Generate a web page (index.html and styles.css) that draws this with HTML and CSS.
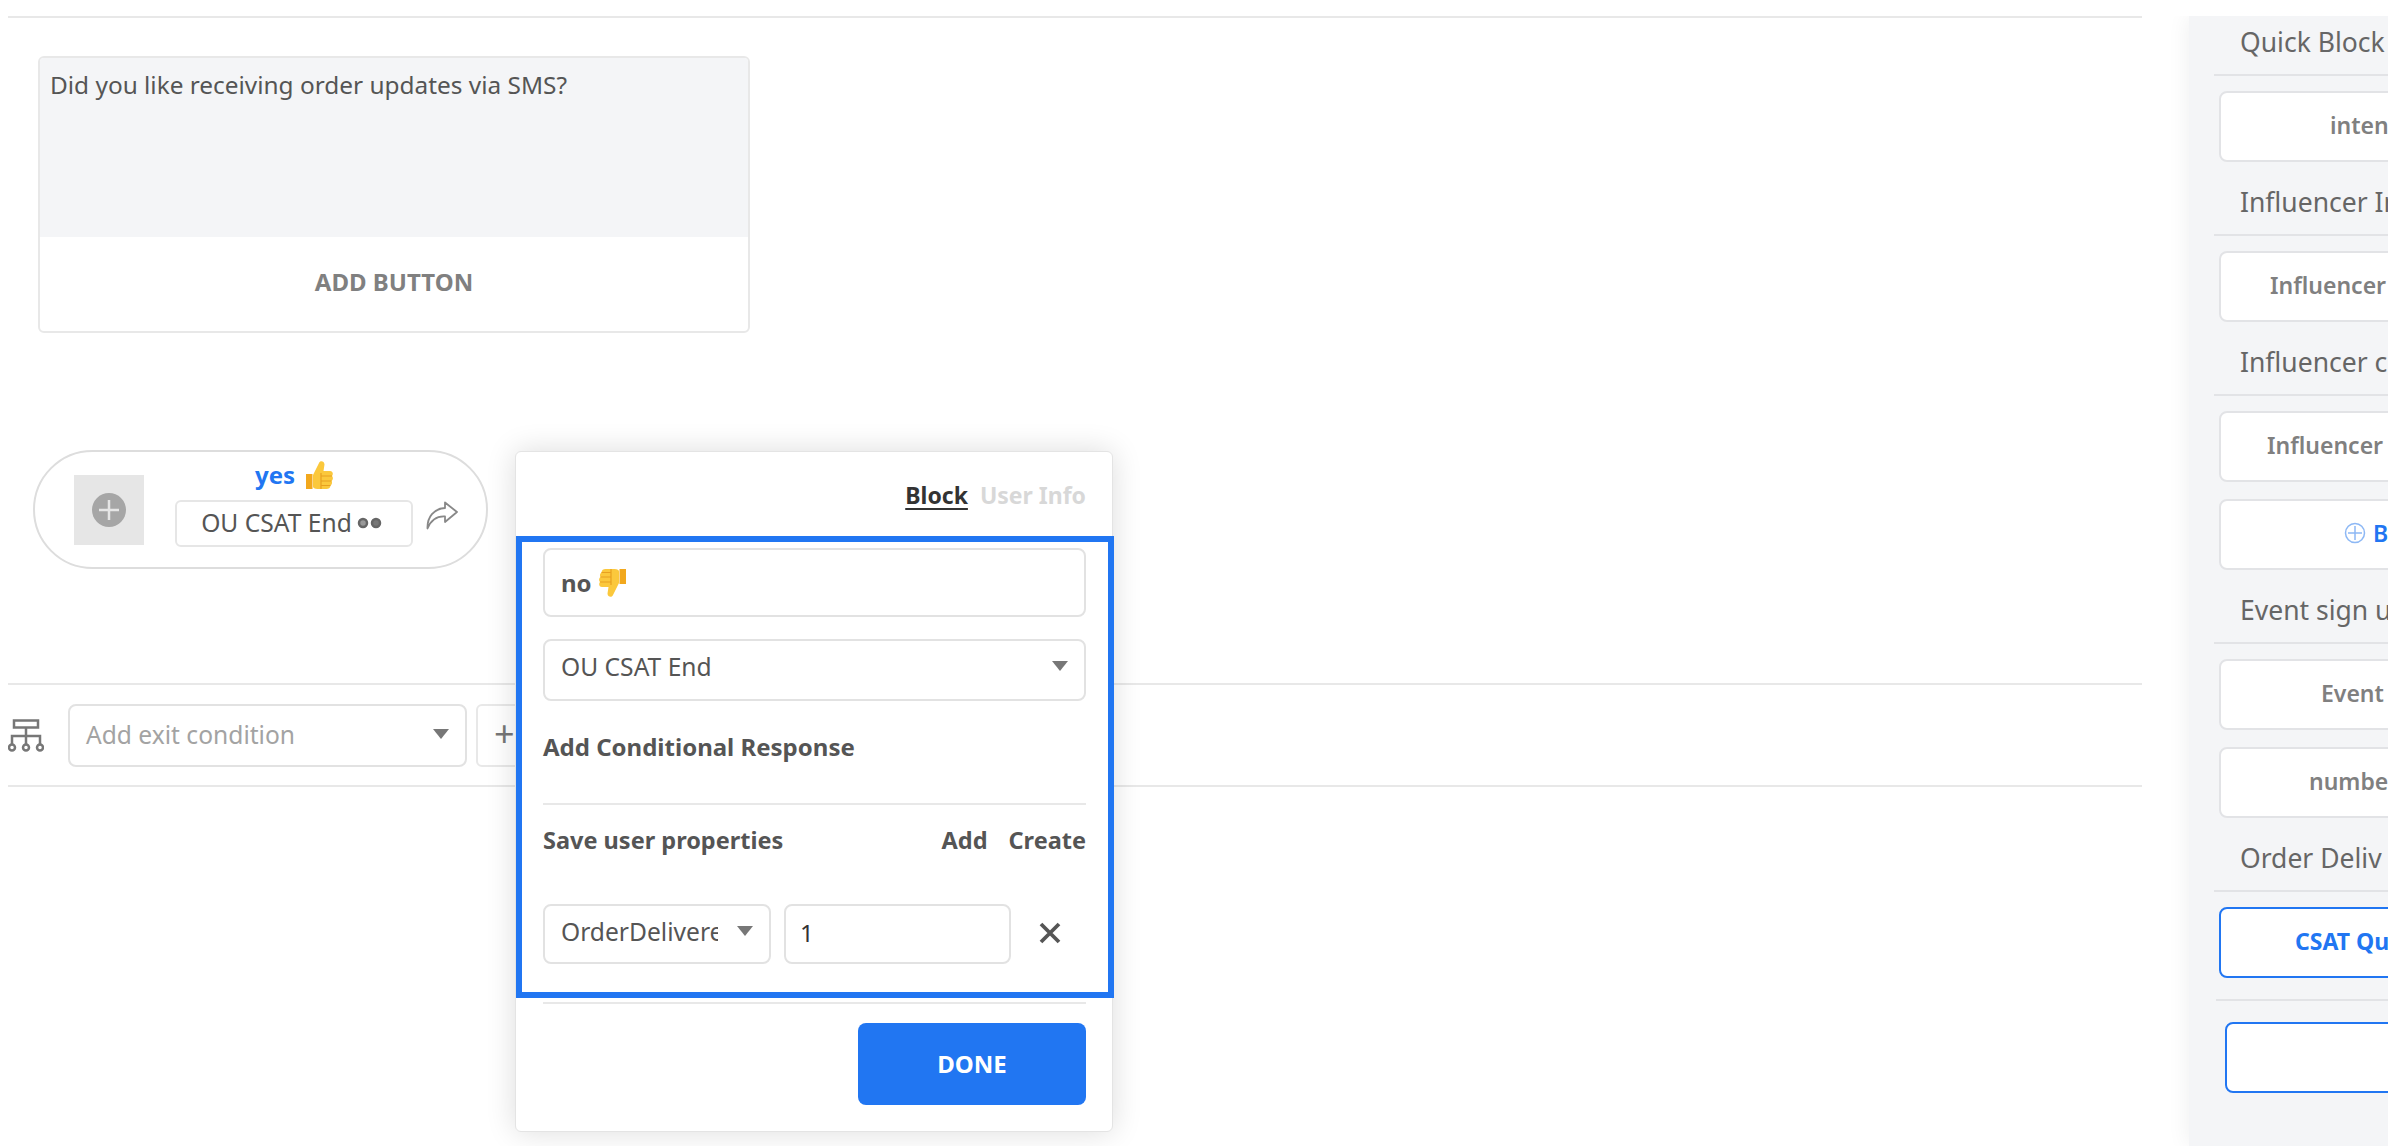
FILE: index.html
```html
<!doctype html>
<html lang="en">
<head>
  <meta charset="UTF-8">
  <title>Block editor</title>
  <link rel="stylesheet" href="styles.css">
</head>
<body>

  <svg class="defs" width="0" height="0">
    <symbol id="thumb" viewBox="0 0 28 30">
      <path fill="#f2a81d" d="M1 14h6.500v15H1z"/>
      <path fill="#fbc83c" d="M8 15 14 3c1-3 5.500-2 5.500 1.500L18.500 11H25c3 0 3.500 3.500 2 5 1.500 1.500 1 4-.5 5 1 1.500.5 3.500-1 4.500 0 2.500-2 3.500-4 3.500h-9C9.500 29 8 28 8 26.500z"/>
      <path fill="none" stroke="#e8a020" stroke-width="1.200" d="M16 16h11M16 21h10.500M16 25.500h9.500M16 13v16"/>
    </symbol>
  </svg>

  <div class="page">

    <div class="main">
      <div class="card">
        <div class="cardText">Did you like receiving order updates via SMS?</div>
        <div class="cardButton">ADD BUTTON</div>
      </div>

      <div class="pill">
        <div class="pillAdd">
          <svg width="34" height="34" viewBox="0 0 34 34">
            <circle cx="17" cy="17" r="17" fill="#a6a6a6"/>
            <path d="M17 7v20M7 17h20" stroke="#e6e6e6" stroke-width="2.500"/>
          </svg>
        </div>
        <div class="pillBody">
          <div class="pillTitle">yes <svg width="28" height="30"><use href="#thumb"/></svg></div>
          <div class="pillBlock">
            OU CSAT End
            <svg width="25" height="12" viewBox="0 0 25 12">
              <circle cx="6" cy="6" r="4" fill="#999" stroke="#666" stroke-width="2.500"/>
              <circle cx="19" cy="6" r="4" fill="#777" stroke="#666" stroke-width="2.500"/>
            </svg>
          </div>
        </div>
        <svg class="share" width="32" height="29" viewBox="0 0 32 29">
          <path d="M19 1.500 31 11 19 21v-5.500C11 15 5 19 1.500 27.500 1 16 8 7.500 19 7z" fill="none" stroke="#888" stroke-width="1.800" stroke-linejoin="round"/>
        </svg>
      </div>

      <div class="exitRow">
        <svg class="treeIcon" width="36" height="33" viewBox="0 0 36 33">
          <g fill="none" stroke="#777" stroke-width="2.500">
            <rect x="6" y="1.500" width="24" height="7"/>
            <path d="M18 8.500V25M4 25v-8h28v8"/>
            <circle cx="4" cy="28.500" r="3"/>
            <circle cx="18" cy="28.500" r="3"/>
            <circle cx="32" cy="28.500" r="3"/>
          </g>
        </svg>
        <div class="select exitSelect">
          <span class="placeholder">Add exit condition</span>
          <i class="caret"></i>
        </div>
        <div class="plusBox">+</div>
      </div>
    </div>

    <div class="sideWrap">
      <div class="side">
        <div class="sideTitle">Quick Block</div>
        <div class="sideBtn padIntent">inten</div>
        <div class="sideTitle">Influencer In</div>
        <div class="sideBtn padInfluencer">Influencer</div>
        <div class="sideTitle">Influencer c</div>
        <div class="sideBtn padInfluencer2">Influencer</div>
        <div class="sideBtn addBtn">
          <svg width="22" height="22" viewBox="0 0 22 22">
            <circle cx="11" cy="11" r="9.500" fill="none" stroke="#8db8f5" stroke-width="1.500"/>
            <path d="M11 4v14M4 11h14" stroke="#8db8f5" stroke-width="1.500"/>
          </svg>
          <span>B</span>
        </div>
        <div class="sideTitle">Event sign u</div>
        <div class="sideBtn padEvent">Event</div>
        <div class="sideBtn padNumber">numbe</div>
        <div class="sideTitle">Order Deliv</div>
        <div class="sideBtn active padCsat">CSAT Qu</div>
        <div class="sideRule"></div>
        <div class="sideBtn outline"></div>
      </div>
    </div>

    <div class="popup">
      <div class="tabs">
        <span class="tab on">Block</span>
        <span class="tab">User Info</span>
      </div>

      <div class="highlight">
        <div class="field nameField">no <svg class="emoji" width="28" height="30"><use href="#thumb" transform="rotate(180 14 15)"/></svg></div>
        <div class="select targetSelect">
          <span>OU CSAT End</span>
          <i class="caret"></i>
        </div>
        <div class="condLabel">Add Conditional Response</div>
        <div class="rule"></div>
        <div class="propsHead">
          <span class="propsTitle">Save user properties</span>
          <span class="propsLinks"><span>Add</span><span>Create</span></span>
        </div>
        <div class="propsRow">
          <div class="select propSelect">
            <span class="clip">OrderDelivered</span>
            <i class="caret"></i>
          </div>
          <div class="field propValue">1</div>
          <svg class="close" width="24" height="22" viewBox="0 0 24 22">
            <path d="M3 2 21 20M21 2 3 20" stroke="#555" stroke-width="3.800"/>
          </svg>
        </div>
      </div>

      <div class="popupFoot">
        <div class="rule"></div>
        <div class="doneBtn">DONE</div>
      </div>
    </div>

  </div>

</body>
</html>
```

FILE: styles.css
```css
html, body {
  height: 100%;
  margin: 0;
}
body {
  overflow: hidden;
  background: #fff;
  color: #555;
  font-family: "Noto Sans", "Open Sans", sans-serif;
  font-size: 24px;
}
.defs {
  position: absolute;
}
.page {
  position: relative;
  display: flex;
  height: 1146px;
  overflow: hidden;
}

/* main column */
.main {
  flex: none;
  box-sizing: border-box;
  width: 2134px;
  height: 772px;
  margin: 16px 0 0 8px;
  border-top: 2px solid #e8e8e8;
}
.card {
  box-sizing: border-box;
  width: 712px;
  height: 277px;
  margin: 38px 0 0 30px;
  border: 2px solid #e8e8e8;
  border-radius: 6px;
  overflow: hidden;
}
.cardText {
  height: 179px;
  box-sizing: border-box;
  padding: 9px 10px;
  background: #f4f5f7;
  font-size: 24.400px;
  line-height: 36px;
}
.cardButton {
  padding-top: 28px;
  text-align: center;
  font-weight: 700;
  color: #808080;
}

.pill {
  box-sizing: border-box;
  display: flex;
  align-items: center;
  width: 455px;
  height: 119px;
  margin: 117px 0 0 25px;
  padding-left: 39px;
  border: 2px solid #ddd;
  border-radius: 60px;
}
.pillAdd {
  flex: none;
  display: flex;
  align-items: center;
  justify-content: center;
  width: 70px;
  height: 70px;
  background: #e6e6e6;
}
.pillBody {
  flex: none;
  width: 238px;
  margin: 0 13px 12px 31px;
}
.pillTitle {
  display: flex;
  align-items: center;
  justify-content: center;
  gap: 10px;
  height: 30px;
  margin-bottom: 10px;
  line-height: 30px;
  font-weight: 700;
  color: #2176f2;
}
.pillBlock {
  box-sizing: border-box;
  display: flex;
  align-items: center;
  justify-content: center;
  gap: 5px;
  height: 47px;
  padding: 0 5px 2px 0;
  border: 2px solid #e6e6e6;
  border-radius: 6px;
  font-size: 24.600px;
}
.share {
  flex: none;
  margin-top: 12px;
}

.exitRow {
  display: flex;
  align-items: center;
  box-sizing: border-box;
  height: 104px;
  margin-top: 114px;
  border-top: 2px solid #e8e8e8;
  border-bottom: 2px solid #e8e8e8;
}
.treeIcon {
  flex: none;
}
.exitSelect {
  width: 399px;
  height: 63px;
  margin-left: 24px;
  padding-bottom: 2px;
  padding-right: 13px;
}
.placeholder {
  color: #a3a3a3;
}
.plusBox {
  box-sizing: border-box;
  width: 60px;
  height: 63px;
  margin-left: 9px;
  padding-left: 16px;
  border: 2px solid #e8e8e8;
  border-radius: 6px;
  font-size: 36px;
  line-height: 56px;
  color: #777;
}

/* shared form bits */
.select,
.field {
  box-sizing: border-box;
  display: flex;
  align-items: center;
  padding-left: 16px;
  border: 2px solid #e2e2e2;
  border-radius: 8px;
  background: #fff;
}
.select {
  justify-content: space-between;
  padding-right: 16px;
  font-size: 24.600px;
}
.caret {
  flex: none;
  width: 0;
  height: 0;
  border-left: 8px solid transparent;
  border-right: 8px solid transparent;
  border-top: 10px solid #777;
}
.rule {
  height: 2px;
  background: #e8e8e8;
}

/* right panel, runs off the window */
.sideWrap {
  flex: 1;
  margin: 16px 0 0 25px;
  padding-left: 22px;
  overflow: hidden;
}
.side {
  box-sizing: border-box;
  width: 600px;
  height: 1130px;
  padding-left: 25px;
  background: #f4f5f7;
  box-shadow: 0 0 22px rgba(0, 0, 0, .07);
}
.sideTitle {
  box-sizing: border-box;
  height: 60px;
  padding: 6px 0 0 26px;
  border-bottom: 2px solid #e2e3e6;
  font-size: 26.500px;
  line-height: 40px;
  white-space: nowrap;
  color: #666;
}
.sideBtn {
  box-sizing: border-box;
  display: flex;
  align-items: center;
  gap: 7px;
  width: 500px;
  height: 71px;
  margin: 15px 0 0 5px;
  padding-bottom: 4px;
  border: 2px solid #e2e3e6;
  border-radius: 8px;
  background: #fff;
  font-size: 23px;
  font-weight: 600;
  color: #808080;
  white-space: nowrap;
}
.sideBtn + .sideTitle {
  margin-top: 14px;
}
.sideBtn + .sideBtn {
  margin-top: 17px;
}
.padIntent { padding-left: 109px; }
.padInfluencer { padding-left: 49px; }
.padInfluencer2 { padding-left: 46px; }
.padEvent { padding-left: 100px; }
.padNumber { padding-left: 88px; }
.padCsat { padding-left: 74px; }
.addBtn {
  padding-left: 123px;
  color: #2176f2;
}
.active {
  border-color: #2176f2;
  font-weight: 700;
  color: #2176f2;
}
.sideRule {
  height: 2px;
  margin: 21px 0 0 2px;
  background: #e2e3e6;
}
.outline {
  margin: 21px 0 0 11px;
  border-color: #2176f2;
}

/* popup over the canvas */
.popup {
  position: absolute;
  top: 451px;
  left: 515px;
  box-sizing: border-box;
  width: 598px;
  height: 681px;
  border: 1px solid #e4e4e4;
  border-radius: 6px;
  background: #fff;
  box-shadow: 0 0 30px rgba(0, 0, 0, .14);
}
.tabs {
  display: flex;
  justify-content: flex-end;
  gap: 12px;
  height: 84px;
  padding: 24px 26px 0 0;
  box-sizing: border-box;
  font-size: 23px;
  line-height: 38px;
  font-weight: 700;
  color: #d8d8d8;
}
.tab.on {
  color: #333;
  text-decoration: underline;
  text-underline-offset: 4px;
}
.highlight {
  box-sizing: border-box;
  height: 462px;
  margin-right: -2px;
  padding: 6px 22px 0 21px;
  border: 6px solid #2176f2;
}
.nameField {
  height: 69px;
  gap: 7px;
  font-weight: 700;
}
.targetSelect {
  height: 62px;
  margin-top: 22px;
  padding-bottom: 8px;
}
.condLabel {
  margin-top: 29px;
  font-weight: 700;
  line-height: 34px;
}
.highlight .rule {
  margin-top: 39px;
}
.propsHead {
  display: flex;
  justify-content: space-between;
  margin-top: 18px;
  font-weight: 700;
  line-height: 34px;
}
.propsTitle {
  font-size: 23.500px;
}
.propsLinks {
  display: flex;
  gap: 21px;
  font-size: 23.500px;
}
.propsRow {
  display: flex;
  align-items: center;
  margin-top: 47px;
}
.propSelect {
  flex: none;
  width: 228px;
  height: 60px;
  padding-bottom: 6px;
}
.clip {
  width: 157px;
  overflow: hidden;
  white-space: nowrap;
}
.propValue {
  flex: none;
  width: 227px;
  height: 60px;
  margin-left: 13px;
  padding: 0 0 4px 14px;
  color: #333;
}
.close {
  flex: none;
  margin: 0 0 2px 27px;
}
.popupFoot {
  padding: 4px 26px 0 27px;
}
.doneBtn {
  display: flex;
  align-items: center;
  justify-content: center;
  width: 228px;
  height: 82px;
  margin: 19px 0 0 auto;
  padding-bottom: 2px;
  box-sizing: border-box;
  border-radius: 8px;
  background: #2176f2;
  font-weight: 700;
  color: #fff;
}
```
